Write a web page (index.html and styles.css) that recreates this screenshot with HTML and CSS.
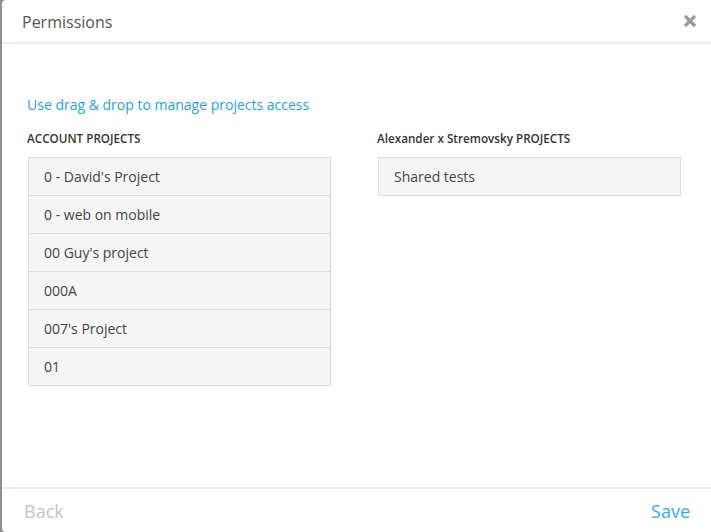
FILE: index.html
```html
<!DOCTYPE html>
<html>
<head>
<meta charset="utf-8">
<link rel="stylesheet" href="styles.css">
</head>
<body>
<div class="modal">
  <div class="modal-header">
    <span class="modal-title">Permissions</span>
    <span class="close">
      <svg width="14" height="14" viewBox="0 0 14 14"><path d="M2 2 L12 12 M12 2 L2 12" stroke="#9a9a9a" stroke-width="3.2" stroke-linecap="butt"/></svg>
    </span>
  </div>
  <div class="modal-body">
    <div class="hint">Use drag &amp; drop to manage projects access</div>
    <div class="columns">
      <div class="col">
        <div class="col-label">ACCOUNT PROJECTS</div>
        <ul class="list">
          <li>0 - David's Project</li>
          <li>0 - web on mobile</li>
          <li>00 Guy's project</li>
          <li>000A</li>
          <li>007's Project</li>
          <li>01</li>
        </ul>
      </div>
      <div class="col">
        <div class="col-label">Alexander x Stremovsky PROJECTS</div>
        <ul class="list">
          <li>Shared tests</li>
        </ul>
      </div>
    </div>
  </div>
  <div class="modal-footer">
    <span class="btn-back">Back</span>
    <span class="btn-save">Save</span>
  </div>
</div>
</body>
</html>
```
FILE: styles.css
```css
* { box-sizing: border-box; }
html, body { margin: 0; padding: 0; height: 100%; }
body {
  background: #8f8f8f;
  font-family: "Open Sans", "Noto Sans", sans-serif;
  padding-left: 2px;
}
.modal {
  background: #fff;
  height: 532px;
  border-radius: 4px 0 0 4px;
  display: flex;
  flex-direction: column;
}
.modal-header {
  height: 44px;
  border-bottom: 2px solid #e4eef6;
  display: flex;
  align-items: center;
  justify-content: space-between;
  padding: 0 14px 0 20px;
}
.modal-title {
  font-size: 16px;
  color: #555;
  margin-top: 2px;
}
.close { display: flex; margin-top: -1px; }
.modal-body {
  flex: 1;
  padding: 51px 30px 0 25px;
}
.hint {
  color: #1ea3dc;
  font-size: 14px;
  line-height: 20px;
}
.columns {
  display: flex;
  gap: 46px;
  margin-top: 15px;
}
.col { width: 304px; }
.col-label {
  font-size: 11.7px;
  font-weight: 600;
  color: #333;
  line-height: 17px;
  margin-bottom: 10px;
}
.list {
  list-style: none;
  margin: 0 0 0 1px;
  padding: 0;
  border: 1px solid #dcdcdc;
  background: #f5f5f5;
}
.list li {
  height: 38px;
  line-height: 37px;
  padding-left: 15px;
  font-size: 14px;
  color: #444;
  border-top: 1px solid #dcdcdc;
}
.list li:first-child { border-top: none; height: 37px; }
.modal-footer {
  height: 45px;
  border-top: 2px solid #e4eef6;
  display: flex;
  align-items: center;
  justify-content: space-between;
  padding: 0 21px 0 22px;
  font-size: 18px;
}
.btn-back { color: #c4c4c4; }
.btn-save { color: #3fa5f0; }
```
